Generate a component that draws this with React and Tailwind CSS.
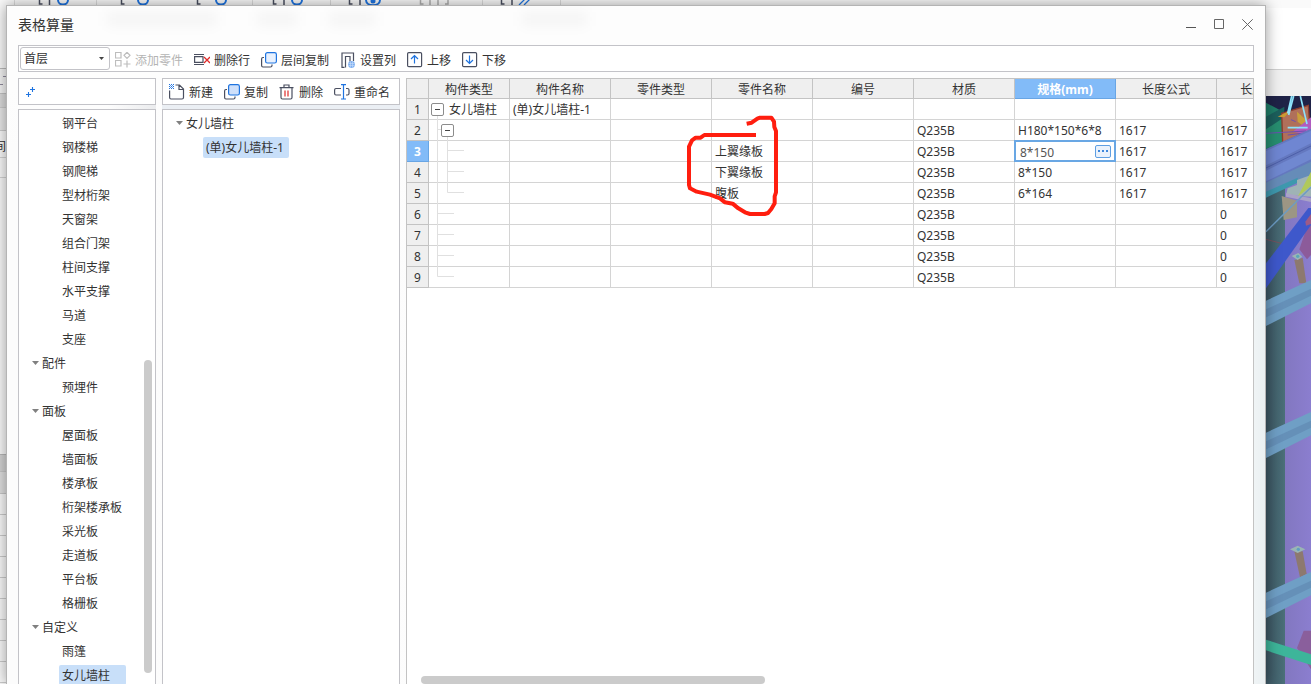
import React from "react";

const MAIN_TREE = [
  { label: "钢平台" },
  { label: "钢楼梯" },
  { label: "钢爬梯" },
  { label: "型材桁架" },
  { label: "天窗架" },
  { label: "组合门架" },
  { label: "柱间支撑" },
  { label: "水平支撑" },
  { label: "马道" },
  { label: "支座" },
  { label: "配件", group: true },
  { label: "预埋件" },
  { label: "面板", group: true },
  { label: "屋面板" },
  { label: "墙面板" },
  { label: "楼承板" },
  { label: "桁架楼承板" },
  { label: "采光板" },
  { label: "走道板" },
  { label: "平台板" },
  { label: "格栅板" },
  { label: "自定义", group: true },
  { label: "雨篷" },
  { label: "女儿墙柱", selected: true },
];

const COLUMNS = ["构件类型", "构件名称", "零件类型", "零件名称", "编号", "材质", "规格(mm)", "长度公式", "长度(mm)"];

const ROWS = [
  { tree: "root", type: "女儿墙柱", name: "(单)女儿墙柱-1" },
  { tree: "node", material: "Q235B", spec: "H180*150*6*8", formula: "1617", length: "1617" },
  { tree: "leaf", part: "上翼缘板", material: "Q235B", spec: "8*150", formula: "1617", length: "1617", active: true },
  { tree: "leaf", part: "下翼缘板", material: "Q235B", spec: "8*150", formula: "1617", length: "1617" },
  { tree: "leafEnd", part: "腹板", material: "Q235B", spec: "6*164", formula: "1617", length: "1617" },
  { tree: "branch", material: "Q235B", length: "0" },
  { tree: "branch", material: "Q235B", length: "0" },
  { tree: "branch", material: "Q235B", length: "0" },
  { tree: "branchEnd", material: "Q235B", length: "0" },
];

const TREE_LINES = {
  root: "M8.5 15V21",
  node: "M8.5 0V21M8.5 9.5H13M18.5 15V21",
  leaf: "M8.5 0V21M18.5 0V21M18.5 9.5H35",
  leafEnd: "M8.5 0V21M18.5 0V9.5H35",
  branch: "M8.5 0V21M8.5 9.5H25",
  branchEnd: "M8.5 0V9.5H25",
};

function Icon({ children }) {
  return (
    <svg width="16" height="16" viewBox="0 0 16 16" fill="none" className="shrink-0" aria-hidden="true">
      {children}
    </svg>
  );
}

const DARK = "#4a4f60";
const BLUE = "#1f74e0";

const AddPartIcon = () => (
  <Icon>
    <path d="M.5 .5h5.500v5.500H.5zM.5 8.500h5.500v5.500H.5zM12 .3l3 3-3 3-3-3zM12 8.500v7M8.500 12h7" stroke="#bdbdbd" strokeWidth="1.200" />
  </Icon>
);
const DeleteRowIcon = () => (
  <Icon>
    <path d="M0 2.500h10M0 12.500h10M.6 4.600h8.400v5.800H.6z" stroke={DARK} strokeWidth="1.200" />
    <path d="M10 5l6 6M16 5l-6 6" stroke="#e02a2a" strokeWidth="1.300" />
  </Icon>
);
const LayerCopyIcon = ({ fill }) => (
  <Icon>
    <path d="M3 5.500H2A1.500 1.500 0 0 0 .6 7v6.500A1.500 1.500 0 0 0 2 15h7.500a1.500 1.500 0 0 0 1.500-1.500v-1" stroke={DARK} strokeWidth="1.200" />
    <rect x="4.600" y=".6" width="10.800" height="10.400" rx="1.800" fill={fill} stroke={BLUE} strokeWidth="1.200" />
  </Icon>
);
const ColumnsIcon = () => (
  <Icon>
    <path d="M4.500 15.400H2V1h11.500v8M5.500 15.400V4.500h4.500v5" stroke={DARK} strokeWidth="1.200" />
    <circle cx="11.500" cy="12.500" r="3.400" fill="#7fb0f1" />
    <path d="M8.500 11.500h6M8.500 13.500h6M10.500 9.500v6M12.500 9.500v6" stroke="#c9defa" strokeWidth=".6" />
  </Icon>
);
const MoveIcon = ({ down }) => (
  <Icon>
    <rect x=".6" y=".6" width="14" height="14" rx="1.200" stroke={DARK} strokeWidth="1.200" />
    <path d={down ? "M7.500 3.500v8M4 8l3.500 3.500L11 8" : "M7.500 11.500v-8M4 7l3.500-3.500L11 7"} stroke={BLUE} strokeWidth="1.200" />
  </Icon>
);
const NewIcon = () => (
  <Icon>
    <path d="M6.500 1h4L14.500 5v8.500a1.500 1.500 0 0 1-1.500 1.500H2A1.500 1.500 0 0 1 .6 13.500V6.500M10 1v4.500h4.500" stroke={DARK} strokeWidth="1.200" />
    <path d="M0 .5h5M0 2.500h5M0 4.500h5" stroke={BLUE} strokeWidth="1" strokeDasharray="1 1" />
    <path d="M1 1.500h4M1 3.500h4" stroke="#5795ea" strokeWidth="1" strokeDasharray="1 1" />
  </Icon>
);
const TrashIcon = () => (
  <Icon>
    <path d="M.5 3.600h14M5 3.500V1h5v2.500M2 4v9.500A1.500 1.500 0 0 0 3.500 15h8a1.500 1.500 0 0 0 1.500-1.500V4" stroke={DARK} strokeWidth="1.200" />
    <path d="M6 6.500v6M9 6.500v6" stroke="#e02a2a" strokeWidth="1.200" />
  </Icon>
);
const RenameIcon = () => (
  <Icon>
    <path d="M7 4.500H2A1.500 1.500 0 0 0 .6 6v3.500A1.500 1.500 0 0 0 2 11h5M12 4.500h1.500A1.500 1.500 0 0 1 15 6v3.500a1.500 1.500 0 0 1-1.500 1.500H12" stroke={DARK} strokeWidth="1.200" />
    <path d="M7 .6h5M7 15h5M9.500 .6V15" stroke={BLUE} strokeWidth="1.200" />
  </Icon>
);

function ToolButton({ icon, label, disabled }) {
  return (
    <button type="button" disabled={disabled} className="flex h-[21px] shrink-0 items-center gap-1 disabled:text-[#b4b4b4]">
      {icon}
      <span className="pt-0.5">{label}</span>
    </button>
  );
}

function Caret() {
  return (
    <svg width="7" height="4" viewBox="0 0 7 4" className="shrink-0" aria-hidden="true">
      <path d="M0 0h7L3.500 4z" fill="#808080" />
    </svg>
  );
}

function TitleBar() {
  return (
    <header className="relative flex h-[39px] shrink-0 items-center justify-between pb-0.5 pl-[11px] pr-1">
      <svg width="560" height="30" viewBox="0 0 560 30" className="absolute left-[60px] top-0 blur-[6px]" aria-hidden="true">
        <path d="M40 13h110M190 13h40M262 13h46M455 13h65" stroke="#000" strokeOpacity=".03" strokeWidth="14" />
      </svg>
      <h1 className="text-sm text-[#333]">表格算量</h1>
      <div className="flex h-full items-center">
        <button type="button" aria-label="最小化" className="flex h-7 w-7 items-center justify-center">
          <svg width="11" height="11" viewBox="0 0 11 11"><path d="M0 8.500h10" stroke="#555" /></svg>
        </button>
        <button type="button" aria-label="最大化" className="flex h-7 w-7 items-center justify-center">
          <svg width="11" height="11" viewBox="0 0 11 11"><path d="M.5 .5h9v9H.5z" fill="none" stroke="#666" /></svg>
        </button>
        <button type="button" aria-label="关闭" className="flex h-7 w-7 items-center justify-center">
          <svg width="11" height="11" viewBox="0 0 11 11"><path d="M.3 .3l10.400 10.400M10.700 .3L.3 10.700" stroke="#666" /></svg>
        </button>
      </div>
    </header>
  );
}

function Toolbar() {
  return (
    <div className="flex h-[27px] shrink-0 items-end gap-[11px] border border-[#c3c3c8] bg-white px-px pb-px">
      <div className="flex items-end gap-[5px]">
        <label className="relative block">
          <select aria-label="楼层" className="block h-[23px] w-[90px] appearance-none rounded-[3px] border border-[#c3c3c8] bg-white pl-[3px] pt-px text-xs leading-5 text-[#333]">
            <option>首层</option>
          </select>
          <svg width="5" height="3" viewBox="0 0 5 3" className="pointer-events-none absolute right-[6px] top-[10px]" aria-hidden="true">
            <path d="M0 0h5L2.500 3z" fill="#444" />
          </svg>
        </label>
        <ToolButton icon={<AddPartIcon />} label="添加零件" disabled />
      </div>
      <ToolButton icon={<DeleteRowIcon />} label="删除行" />
      <ToolButton icon={<LayerCopyIcon fill="#e8f1fe" />} label="层间复制" />
      <ToolButton icon={<ColumnsIcon />} label="设置列" />
      <ToolButton icon={<MoveIcon />} label="上移" />
      <ToolButton icon={<MoveIcon down />} label="下移" />
    </div>
  );
}

function CategoryPanel() {
  return (
    <section className="flex w-[138px] shrink-0 flex-col gap-1 bg-[linear-gradient(90deg,#fdfdfd_65%,#ebecee)]">
      <div className="flex h-[27px] shrink-0 items-center border border-[#c3c3c8] bg-white pl-[7px] pt-0.5">
        <button type="button" aria-label="展开全部">
          <svg width="11" height="11" viewBox="0 0 11 11" fill="none" className="block" aria-hidden="true">
            <path d="M4 2.500h5M6.500 0v5M0 7.500h5M2.500 5v5" stroke={BLUE} strokeWidth="1.100" />
          </svg>
        </button>
      </div>
      <div className="relative min-h-0 flex-1 overflow-hidden border border-b-0 border-[#c3c3c8] bg-white pt-px">
        <ul>
          {MAIN_TREE.map((item) => (
            <li key={item.label} className={item.group ? "flex h-6 items-center pl-[13px]" : "flex h-6 items-center pl-10"}>
              {item.group ? (
                <button type="button" className="flex items-center gap-[3px]">
                  <Caret />
                  <span className="pt-0.5">{item.label}</span>
                </button>
              ) : (
                <button type="button" className={item.selected ? "h-5 rounded-[2px] bg-[#c8dff9] pl-[3px] pr-4 pt-0.5" : "pl-[3px] pt-0.5"}>
                  {item.label}
                </button>
              )}
            </li>
          ))}
        </ul>
        <div className="absolute bottom-[11px] right-[3px] h-[313px] w-2 rounded-full bg-[#cbcbcb]" />
      </div>
    </section>
  );
}

function ComponentPanel() {
  return (
    <section className="flex w-[238px] shrink-0 flex-col gap-1 bg-[#ebeff4]">
      <div className="flex h-[27px] shrink-0 items-center gap-[11px] border border-[#c3c3c8] bg-white pl-1.5">
        <ToolButton icon={<NewIcon />} label="新建" />
        <ToolButton icon={<LayerCopyIcon fill="#cfe0fa" />} label="复制" />
        <ToolButton icon={<TrashIcon />} label="删除" />
        <ToolButton icon={<RenameIcon />} label="重命名" />
      </div>
      <div className="min-h-0 flex-1 border border-b-0 border-[#c3c3c8] bg-white pt-px">
        <ul>
          <li className="flex h-6 items-center pl-[13px]">
            <button type="button" className="flex items-center gap-[3px]">
              <Caret />
              <span className="pt-0.5">女儿墙柱</span>
            </button>
          </li>
          <li className="flex h-6 items-center pl-10">
            <button type="button" className="h-[21px] rounded-[2px] bg-[#c8dff9] pl-[3px] pr-[5px] pt-0.5">(单)女儿墙柱-1</button>
          </li>
        </ul>
      </div>
    </section>
  );
}

function Expander() {
  return (
    <button type="button" aria-label="折叠" className="relative block h-[13px] w-[13px] shrink-0 rounded-[2px] border border-[#8c8c8c] bg-white">
      <svg width="11" height="11" viewBox="0 0 11 11" className="block" aria-hidden="true">
        <path d="M3 5.500h5" stroke="#444" />
      </svg>
    </button>
  );
}

function TreeCell({ row }) {
  return (
    <div className="relative flex h-5 items-center">
      <svg width="80" height="21" viewBox="0 0 80 21" fill="none" className="absolute left-0 top-0" aria-hidden="true">
        <path d={TREE_LINES[row.tree]} stroke="#e0e0e0" />
      </svg>
      {row.tree === "root" && (
        <div className="flex items-center gap-[5px] pl-0.5">
          <Expander />
          <span className="pt-0.5">{row.type}</span>
        </div>
      )}
      {row.tree === "node" && (
        <div className="pl-3">
          <Expander />
        </div>
      )}
    </div>
  );
}

function SpecEditor({ value }) {
  return (
    <div className="absolute -left-px -top-px bottom-[-1px] right-[-1px] flex items-center border-2 border-[#69a7e4] bg-white pl-1 pr-[3px]">
      <input aria-label="规格" defaultValue={value} className="h-[18px] min-w-0 flex-1 bg-transparent pt-0.5 text-[#555] outline-none" />
      <button type="button" aria-label="更多" className="flex h-[13px] w-4 shrink-0 items-center justify-center rounded-[2px] border border-[#5f9fe2] bg-[#eaf2fc]">
        <svg width="10" height="2" viewBox="0 0 10 2" aria-hidden="true">
          <path d="M0 1h2M4 1h2M8 1h2" stroke="#3f88dc" strokeWidth="2" />
        </svg>
      </button>
    </div>
  );
}

function Markup() {
  return (
    <svg width="120" height="150" viewBox="0 12 360 450" fill="none" className="pointer-events-none absolute left-[263px] top-0" aria-hidden="true">
      <path
        d="M230 146L245 143L262 131L270 128H304L312 140L313 156L318 168V352L314 364V385L304 402L294 414L284 417H240L225 412L205 400L188 386L165 382L150 370L120 359L80 350L60 340L57 330V215L66 196L77 188H92L103 180H258"
        stroke="#ff1e0f"
        strokeWidth="12"
        strokeLinejoin="round"
      />
    </svg>
  );
}

const CELL = "h-[21px] border-b border-r border-[#d4d4d4] p-0 pl-[3px] pt-0.5";

function PartsTable() {
  return (
    <section className="relative min-w-0 flex-1 overflow-hidden border border-b-0 border-[#c3c3c3] bg-white">
      <table className="w-[911px] table-fixed border-separate border-spacing-0 whitespace-nowrap text-left">
        <colgroup>
          <col className="w-[22px]" />
          <col className="w-[81px]" />
          {COLUMNS.slice(1).map((c) => (
            <col key={c} className="w-[101px]" />
          ))}
        </colgroup>
        <thead>
          <tr>
            <th className="h-5 border-b border-r border-[#c3c3c3] bg-[#efefef] p-0" />
            {COLUMNS.map((c) => (
              <th
                key={c}
                scope="col"
                className={
                  c === "规格(mm)"
                    ? "h-5 border-b border-r border-[#68a5e4] bg-[#82bbf8] p-0 pt-0.5 text-center font-bold text-white"
                    : "h-5 border-b border-r border-[#c3c3c3] bg-[#efefef] p-0 pt-0.5 text-center font-normal"
                }
              >
                {c}
              </th>
            ))}
          </tr>
        </thead>
        <tbody>
          {ROWS.map((row, i) => (
            <tr key={i}>
              <th
                scope="row"
                className={
                  row.active
                    ? "h-[21px] border-b border-r border-[#68a5e4] bg-[#82bbf8] p-0 pt-0.5 text-center font-bold text-white"
                    : "h-[21px] border-b border-r border-[#c3c3c3] bg-[#efefef] p-0 pt-0.5 text-center font-normal"
                }
              >
                {i + 1}
              </th>
              <td className="h-[21px] border-b border-r border-[#d4d4d4] p-0">
                <TreeCell row={row} />
              </td>
              <td className={CELL}>{row.name}</td>
              <td className={CELL} />
              <td className={CELL}>{row.part}</td>
              <td className={CELL} />
              <td className={CELL}>{row.material}</td>
              <td className={row.active ? "relative h-[21px] border-b border-r border-[#d4d4d4] p-0" : CELL}>
                {row.active ? <SpecEditor value={row.spec} /> : row.spec}
              </td>
              <td className={CELL}>{row.formula}</td>
              <td className={CELL}>{row.length}</td>
            </tr>
          ))}
        </tbody>
      </table>
      <Markup />
      <div className="absolute bottom-0 left-[14px] h-2 w-[344px] rounded-full bg-[#cbcbcb]" />
    </section>
  );
}

function RibbonStrip() {
  return (
    <svg width="620" height="8" viewBox="0 0 620 8" fill="none" className="block shrink-0" aria-hidden="true">
      <path d="M14.500 0v8M96.500 0v8M252.500 0v8M330.500 0v8M482.500 0v8M560.500 0v8" stroke="#dcdcdc" />
      <path d="M39.500 0v4h3M49.500 0v5M121.500 0v4h3M197.500 0v4h3M273.500 0v4h3M284 0v5M349.500 0v4h3M360 0v5M501.500 0v4h3M512 0v5" stroke={DARK} strokeWidth="1.500" />
      <path d="M420.500 0v4h3M430 0v5M438 0v5M448 0v4h-3" stroke="#b0b0b0" strokeWidth="1.500" />
      <path d="M58 0c0 6 10 6 10 0M138 0c0 6 10 6 10 0M216 0c0 6 10 6 10 0M292 0c0 6 10 6 10 0M366 0c0 7 14 7 14 0" stroke={BLUE} strokeWidth="2" />
      <circle cx="373" cy="1" r="2.500" fill={BLUE} />
      <path d="M519 5l6-6M524 5l6-6" stroke={BLUE} strokeWidth="1.300" />
    </svg>
  );
}

function SideStrip() {
  return (
    <div className="flex w-5 flex-col overflow-hidden">
      <div className="h-[61px] shrink-0 border-b border-[#bbb]" />
      <div className="h-[25px] shrink-0 border-b border-[#c4c4c4] bg-[#f4f4f4] pt-1.5 leading-4 text-[#888]">
        <svg width="6" height="12" viewBox="0 0 6 12" aria-hidden="true">
          <path d="M3 1.500h3M0 9.500h3" stroke="#8f8a9c" />
        </svg>
      </div>
      <div className="h-[13px] shrink-0 bg-[#dcdcdc]" />
      <div className="h-6 shrink-0 border-y border-[#ccc] bg-[#e8e8e8]" />
      <div className="h-[27px] shrink-0 border-b border-[#d4d4d4] pt-1 leading-6">
        <span className="-ml-1.5 block">间</span>
      </div>
      <div className="h-5 shrink-0 border-b border-[#d4d4d4]" />
      <div className="h-[277px] shrink-0 border-b border-[#b8b8b8]" />
      <div className="h-4 shrink-0 bg-[#d4d4d4]" />
      <div className="h-[23px] shrink-0 border-y border-[#c8c8c8] bg-[#e0e0e0]" />
      {[0, 1, 2, 3, 4, 5, 6, 7, 8, 9].map((n) => (
        <div key={n} className="h-[21px] shrink-0 border-b border-[#ccc]" />
      ))}
    </div>
  );
}

function ModelView() {
  return (
    <svg viewBox="45 48 135 1764" preserveAspectRatio="xMaxYMin slice" className="block h-full w-full" aria-hidden="true">
      <defs>
        <linearGradient id="column" x1="0" x2="1" y1="0" y2="0">
          <stop offset="0" stopColor="#3c5663" />
          <stop offset="1" stopColor="#4b7079" />
        </linearGradient>
        <linearGradient id="wall" x1="0" x2="1" y1="0" y2="0">
          <stop offset="0" stopColor="#8277c0" />
          <stop offset="1" stopColor="#8b7ecf" />
        </linearGradient>
      </defs>
      <path d="M45 48H180V1812H45z" fill="#1f2247" />
      <path d="M102 240H180V1812H102z" fill="url(#wall)" />
      <path d="M45 300H102V1812H45z" fill="url(#column)" />
      <path d="M45 68L110 103V190L45 215z" fill="#1f7d68" />
      <path d="M45 110L100 80V140L45 155z" fill="#1b5f5c" />
      <path d="M45 148L95 115V185L45 205z" fill="#278e70" />
      <path d="M92 100L172 76L177 150L95 188z" fill="#b0705a" stroke="#8c3d2e" strokeWidth="4" />
      <path d="M80 110L120 90L100 112z" fill="#c99b32" />
      <path d="M138 95L168 122L166 145L140 125z" fill="#c9a03a" />
      <path d="M125 155L180 112V165z" fill="#b05cc0" />
      <path d="M120 119l14 6M45 160L165 153M110 165l50-6" stroke="#6b4fb0" strokeWidth="3" />
      <path d="M128 48L113 105M122 48L110 100M148 48L168 132M110 143H170" stroke="#8de3fb" strokeWidth="5" fill="none" />
      <path d="M45 207L180 146V262L45 322z" fill="#6478bf" />
      <path d="M45 213L180 152V190L45 256z" fill="#6f86d2" />
      <path d="M45 272L180 207V238L45 304z" fill="#7088d0" />
      <path d="M45 264L180 198" stroke="#4d5fa8" strokeWidth="3" />
      <path d="M45 308L180 245V290L45 348z" fill="#668cb8" />
      <path d="M45 335L140 293V308L45 353z" fill="#3e98ae" />
      <path d="M138 300L180 285V350L105 345L110 325L138 315z" fill="#9fb3b5" />
      <path d="M105 340L180 355V366L105 350z" fill="#aaa3c6" />
      <path d="M180 275L140 350L180 318z" fill="#b0c95a" />
      <path d="M92 348L138 362V412L98 420z" fill="#9c9684" />
      <path d="M45 455L180 322" stroke="#6b9cc4" strokeWidth="4" />
      <path d="M45 478L110 495" stroke="#8c4858" strokeWidth="2" />
      <path d="M180 405L145 508L168 538L180 525z" fill="#8c5b9a" />
      <path d="M45 550L172 384H180V435L45 625z" fill="#3e58cb" />
      <path d="M180 402L163 425L165 437L180 432z" fill="#9d5a86" />
      <path d="M130 540L155 534L166 610H145z" fill="#8d796f" />
      <path d="M122 528L142 519L154 530L140 540z" fill="#9ab5b4" />
      <circle cx="140" cy="529" r="5" fill="#5aa6ba" />
      <path d="M130 1414H155L167 1482L147 1492z" fill="#8d796f" />
      <path d="M117 1408L140 1397L163 1408L140 1419z" fill="#9ab5b4" />
      <circle cx="142" cy="1408" r="5" fill="#5f9fc0" />
      {[0, 396, 876].map((dy) => (
        <g key={dy} transform={`translate(0 ${dy})`}>
          <path d="M45 662L180 600V670L45 738z" fill="#6f9fc5" />
          <path d="M45 688L180 626V647L45 712z" fill="#6590b8" />
        </g>
      ))}
      <path d="M158 1652H180V1768L138 1704z" fill="#8a5f9c" />
      <path d="M45 1679L180 1723V1755L45 1711z" fill="#3db59a" />
    </svg>
  );
}

function HostWindow() {
  return (
    <div className="flex h-full flex-col bg-[#fafafa]" aria-hidden="true">
      <RibbonStrip />
      <div className="flex min-h-0 flex-1 justify-between">
        <SideStrip />
        <div className="flex w-[45px] flex-col">
          <div className="h-[62px] shrink-0 border-b border-[#d0d0d0] bg-white" />
          <div className="h-[26px] shrink-0 bg-[#f0f0f0]" />
          <div className="min-h-0 flex-1">
            <ModelView />
          </div>
        </div>
      </div>
    </div>
  );
}

export default function App() {
  return (
    <div className="relative h-screen overflow-hidden font-['Noto_Sans','Noto_Sans_CJK_SC',sans-serif] text-xs text-[#333]">
      <HostWindow />
      <main className="absolute bottom-0 left-1.5 right-[45px] top-[5px] flex flex-col border border-b-0 border-[#b4b4b4] bg-[linear-gradient(180deg,#fdfdfd_80px,transparent_150px),linear-gradient(90deg,#fcfcfc,#fdfdfd_97%,#eaf0f2)] shadow-[0_0_14px_rgba(0,0,0,0.4)]">
        <TitleBar />
        <div className="flex min-h-0 flex-1 flex-col gap-1.5 px-[11px]">
          <Toolbar />
          <div className="flex min-h-0 flex-1 gap-1.5">
            <CategoryPanel />
            <ComponentPanel />
            <PartsTable />
          </div>
        </div>
      </main>
    </div>
  );
}
